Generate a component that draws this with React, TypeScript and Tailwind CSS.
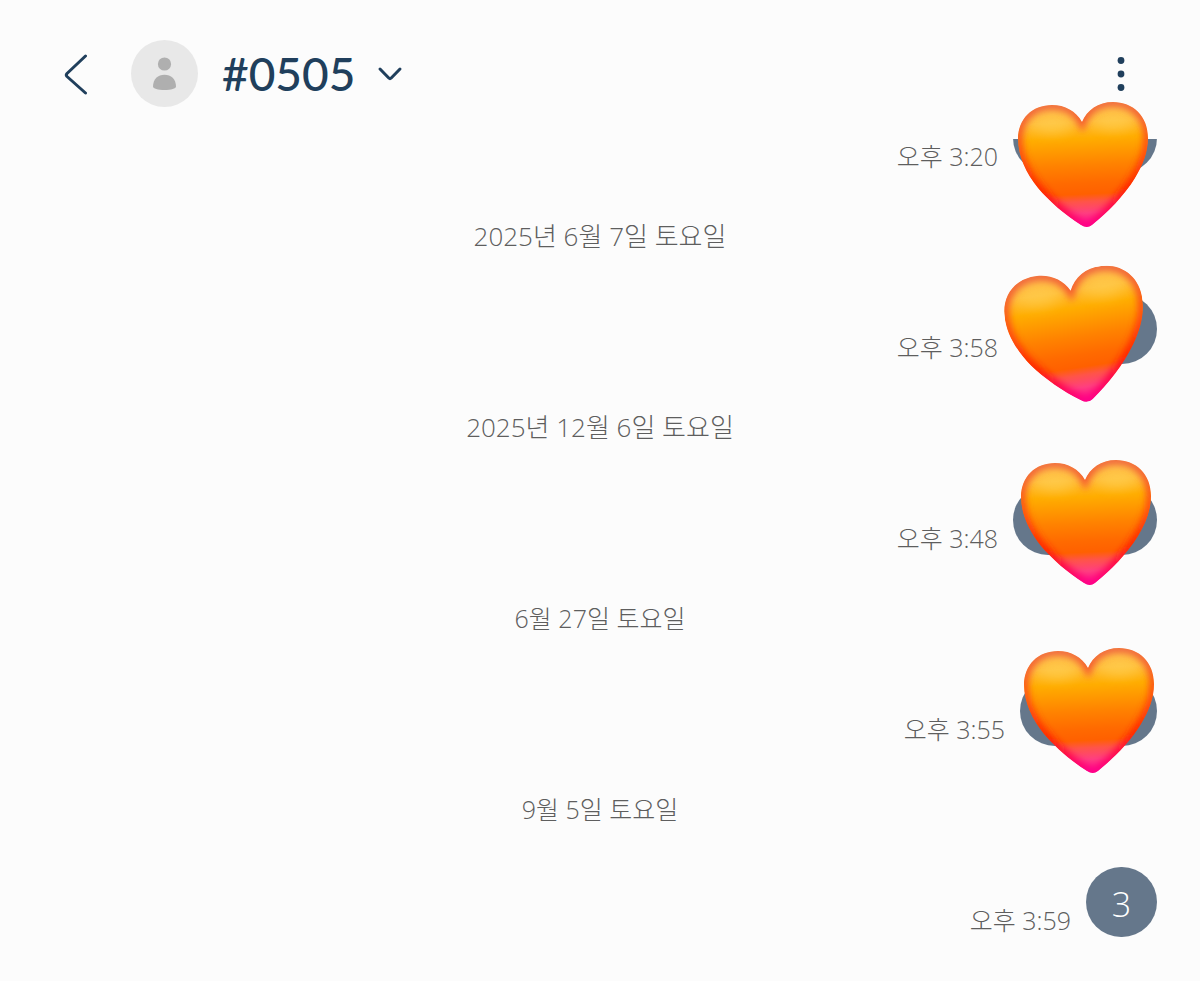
import { useId } from 'react';

interface Message {
  id: number;
  date?: string;
  dateClass?: string;
  time: string;
  text?: string;
  bubbleClass: string;
  heartClass?: string;
}

const MESSAGES: Message[] = [
  { id: 1, time: '오후 3:20', bubbleClass: 'w-36', heartClass: 'w-[132px] right-2 -top-px' },
  { id: 2, date: '2025년 6월 7일 토요일', dateClass: 'text-[26px]', time: '오후 3:58', bubbleClass: 'w-36', heartClass: 'w-[141px] right-2.5 -top-[25px] -rotate-6' },
  { id: 3, date: '2025년 12월 6일 토요일', dateClass: 'text-[26px]', time: '오후 3:48', bubbleClass: 'w-36', heartClass: 'w-[132px] right-[5px] -top-[25px]' },
  { id: 4, date: '6월 27일 토요일', dateClass: 'text-[25px]', time: '오후 3:55', bubbleClass: 'w-[137px]', heartClass: 'w-[132px] right-0.5 -top-7' },
  { id: 5, date: '9월 5일 토요일', dateClass: 'text-[25px]', time: '오후 3:59', text: '3', bubbleClass: 'w-[71px]' },
];

const HEART_PATH =
  'M65 20 C59 9 48 3 35 3 C15 3 1 17 1 37 C1 54 9 71 21 86 C32 99 48 113 64 123 Q70 127 75 123 C91 110 107 94 118 76 C126 63 131 50 131 36 C131 14 116 0 96 0 C81 0 70 8 65 20 Z';

function Heart({ className }: { className: string }) {
  const id = useId();
  return (
    <svg viewBox="0 0 132 126" className={`absolute z-20 max-w-none ${className}`} aria-hidden="true">
      <defs>
        <clipPath id={`${id}-clip`}>
          <path d={HEART_PATH} />
        </clipPath>
        <linearGradient id={`${id}-fill`} gradientUnits="userSpaceOnUse" x1="64" y1="0" x2="70" y2="126">
          <stop offset="0" stopColor="#ffbe4c" />
          <stop offset="0.16" stopColor="#ffc03c" />
          <stop offset="0.29" stopColor="#ffad00" />
          <stop offset="0.5" stopColor="#ff8200" />
          <stop offset="0.64" stopColor="#ff6a00" />
          <stop offset="0.73" stopColor="#ff6000" />
          <stop offset="0.79" stopColor="#ff5448" />
          <stop offset="0.88" stopColor="#ff3f80" />
          <stop offset="1" stopColor="#ff0090" />
        </linearGradient>
        <linearGradient id={`${id}-edge`} gradientUnits="userSpaceOnUse" x1="64" y1="0" x2="70" y2="126">
          <stop offset="0" stopColor="#ee6440" />
          <stop offset="0.4" stopColor="#ff4a10" />
          <stop offset="0.7" stopColor="#ff2000" />
          <stop offset="0.85" stopColor="#ff0048" />
          <stop offset="1" stopColor="#ff0090" />
        </linearGradient>
        <filter id={`${id}-soft`} x="-20%" y="-20%" width="140%" height="140%">
          <feGaussianBlur stdDeviation="3.5" />
        </filter>
        <filter id={`${id}-glow`} x="-60%" y="-120%" width="220%" height="340%">
          <feGaussianBlur stdDeviation="6" />
        </filter>
      </defs>
      <g clipPath={`url(#${id}-clip)`}>
        <path d={HEART_PATH} fill={`url(#${id}-fill)`} />
        <ellipse cx="35" cy="24" rx="18" ry="8" fill="#ffd65c" opacity="0.45" filter={`url(#${id}-glow)`} />
        <ellipse cx="97" cy="21" rx="18" ry="8" fill="#ffd65c" opacity="0.45" filter={`url(#${id}-glow)`} />
        <path d={HEART_PATH} fill="none" stroke={`url(#${id}-edge)`} strokeWidth="9" filter={`url(#${id}-soft)`} />
      </g>
    </svg>
  );
}

function Header() {
  return (
    <header className="relative z-10 flex items-center bg-[#fcfcfc] pt-10 pb-8 pl-16 pr-[67px] text-[#203f5c]">
      <button type="button" aria-label="뒤로" className="mr-[43px]">
        <svg width="24" height="42" viewBox="0 0 24 42" fill="none" stroke="currentColor" strokeWidth="3" strokeLinecap="round" strokeLinejoin="round">
          <path d="M21.500 3 L3 20.500 Q1.600 22 3 23.500 L21.500 40" />
        </svg>
      </button>
      <svg width="67" height="67" viewBox="0 0 67 67" aria-hidden="true">
        <circle cx="33.500" cy="33.500" r="33.500" fill="#e8e8e8" />
        <circle cx="33.500" cy="24" r="6.600" fill="#afafaf" />
        <path d="M22 46.500 C22 39 27 34.700 33.500 34.700 C40 34.700 45 39 45 46.500 C45 48.500 40 50 33.500 50 C27 50 22 48.500 22 46.500 Z" fill="#afafaf" />
      </svg>
      <button type="button" className="ml-6 flex items-center gap-[22px]">
        <h1 className="font-[Lato,'Noto_Sans_CJK_KR',sans-serif] text-[46px] leading-[67px] font-medium">#0505</h1>
        <svg width="26" height="16" viewBox="0 0 26 16" fill="none" stroke="currentColor" strokeWidth="3" strokeLinecap="round" strokeLinejoin="round" aria-hidden="true">
          <path d="M3 3 L11.800 12 Q13 13.200 14.200 12 L23 3" />
        </svg>
      </button>
      <button type="button" aria-label="더보기" className="ml-auto">
        <svg width="24" height="40" viewBox="0 0 24 40" fill="currentColor">
          <circle cx="12" cy="6.500" r="3.400" />
          <circle cx="12" cy="20" r="3.400" />
          <circle cx="12" cy="33.500" r="3.400" />
        </svg>
      </button>
    </header>
  );
}

export default function App() {
  return (
    <div className="min-h-screen bg-[#fcfcfc] font-['Open_Sans','Noto_Sans_CJK_KR',sans-serif] font-light text-[#5e5e5e]">
      <Header />
      {/* The list is scrolled so its first bubble sits partly under the header */}
      <main className="-mt-9 pr-[43px] pb-11">
        {MESSAGES.map((message) => (
          <section key={message.id}>
            {message.date && (
              <h2 className={`-mr-[43px] flex h-[121px] items-center justify-center pt-1 leading-9 ${message.dateClass}`}>{message.date}</h2>
            )}
            <div className="flex items-end justify-end gap-[15px]">
              <time className="text-[25px] leading-[34px]">{message.time}</time>
              <div className={`relative flex h-[70px] items-center justify-center rounded-full bg-[#65778b] ${message.bubbleClass}`}>
                {message.text && <p className="pt-1 text-[34px] leading-10 text-white">{message.text}</p>}
                {message.heartClass && <Heart className={message.heartClass} />}
              </div>
            </div>
          </section>
        ))}
      </main>
    </div>
  );
}
